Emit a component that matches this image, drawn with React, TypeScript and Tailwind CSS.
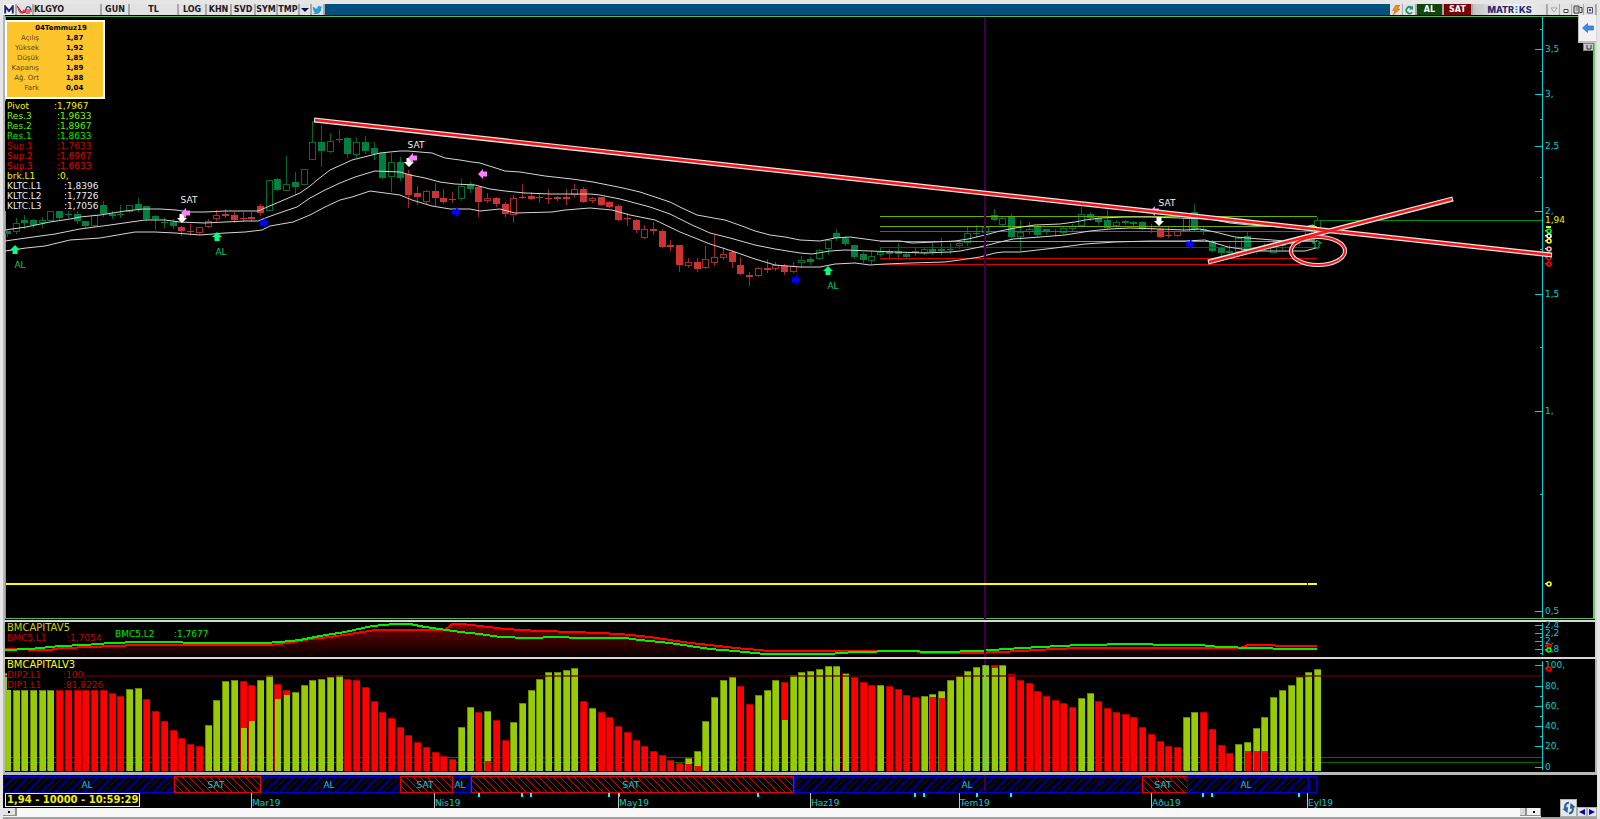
import React from 'react';

type Kind = 'g' | 'G' | 'r' | 'R';
type Candle = [number, number, number, number, Kind];
type Bar = [Kind, number, number?];
type Point = [number, number];

const FONT = 'DejaVu Sans, Verdana, sans-serif';
const CYAN = '#00d0d0';

const slotX = (i: number) => Math.round(15.5 + 8.733 * (i - 1));

// high, body top, body bottom, low, kind (capital = hollow body)
const candles: Candle[] = [
  [230, 231, 234, 236, 'g'], [218, 223, 231, 233, 'G'], [215, 220, 223, 228, 'g'], [219, 220, 225, 227, 'g'],
  [217, 220, 222, 227, 'G'], [211, 211, 220, 220, 'G'], [211, 211, 218, 219, 'g'], [211, 214, 215, 217, 'g'],
  [211, 214, 221, 223, 'g'], [221, 221, 226, 227, 'g'], [214, 215, 225, 226, 'G'], [201, 205, 214, 216, 'g'],
  [211, 214, 216, 218, 'g'], [205, 214, 215, 217, 'g'], [205, 205, 211, 212, 'G'], [198, 204, 209, 211, 'g'],
  [206, 206, 219, 220, 'g'], [215, 216, 219, 229, 'g'], [218, 222, 223, 227, 'g'], [219, 222, 226, 228, 'g'],
  [226, 227, 231, 235, 'r'], [224, 231, 232, 234, 'r'], [227, 227, 232, 233, 'R'], [219, 221, 226, 227, 'R'],
  [210, 215, 218, 220, 'R'], [209, 214, 216, 217, 'r'], [212, 215, 220, 222, 'r'], [212, 218, 219, 221, 'r'],
  [212, 217, 219, 221, 'r'], [204, 206, 213, 215, 'r'], [180, 180, 210, 210, 'G'], [178, 179, 190, 190, 'g'],
  [156, 184, 190, 190, 'G'], [172, 182, 187, 194, 'g'], [169, 169, 184, 184, 'G'], [121, 142, 159, 159, 'G'],
  [125, 142, 151, 166, 'g'], [134, 141, 151, 152, 'G'], [129, 139, 140, 142, 'g'], [137, 138, 154, 157, 'g'],
  [138, 142, 154, 157, 'G'], [136, 142, 151, 153, 'g'], [142, 148, 154, 159, 'g'], [153, 153, 178, 178, 'g'],
  [153, 162, 176, 191, 'G'], [157, 162, 178, 180, 'g'], [170, 174, 195, 207, 'r'], [186, 193, 197, 204, 'r'],
  [190, 191, 201, 203, 'R'], [183, 191, 198, 206, 'r'], [189, 198, 202, 203, 'r'], [192, 199, 200, 202, 'r'],
  [179, 186, 198, 200, 'G'], [182, 184, 189, 192, 'g'], [186, 187, 202, 216, 'r'], [193, 198, 200, 202, 'R'],
  [197, 198, 204, 206, 'r'], [202, 204, 214, 216, 'r'], [195, 198, 214, 222, 'R'], [184, 197, 198, 198, 'r'],
  [192, 196, 199, 199, 'r'], [193, 197, 198, 202, 'r'], [189, 198, 199, 203, 'r'], [196, 197, 199, 200, 'r'],
  [189, 197, 199, 204, 'r'], [184, 189, 194, 197, 'R'], [187, 189, 202, 202, 'r'], [197, 198, 200, 202, 'R'],
  [197, 197, 205, 205, 'r'], [201, 202, 207, 207, 'r'], [204, 206, 220, 220, 'r'], [213, 218, 219, 225, 'r'],
  [219, 220, 230, 232, 'r'], [225, 229, 237, 238, 'R'], [222, 229, 231, 234, 'r'], [229, 231, 247, 247, 'r'],
  [240, 245, 247, 250, 'r'], [245, 245, 265, 271, 'r'], [258, 262, 265, 267, 'R'], [258, 262, 269, 271, 'r'],
  [246, 259, 267, 268, 'R'], [235, 257, 262, 265, 'R'], [247, 254, 257, 259, 'R'], [250, 252, 262, 267, 'r'],
  [257, 265, 274, 274, 'r'], [272, 275, 277, 285, 'r'], [267, 268, 275, 276, 'R'], [259, 268, 270, 272, 'r'],
  [262, 265, 268, 270, 'R'], [264, 266, 272, 274, 'r'], [262, 266, 271, 272, 'R'], [256, 260, 262, 267, 'G'],
  [257, 259, 262, 264, 'g'], [249, 250, 258, 259, 'G'], [239, 240, 248, 254, 'G'], [229, 233, 238, 240, 'g'],
  [236, 238, 244, 245, 'g'], [245, 245, 257, 258, 'g'], [252, 254, 260, 262, 'g'], [251, 256, 260, 263, 'G'],
  [248, 252, 254, 256, 'G'], [249, 251, 254, 258, 'g'], [243, 251, 254, 258, 'g'], [252, 254, 257, 258, 'g'],
  [248, 251, 253, 255, 'g'], [248, 249, 252, 254, 'G'], [243, 249, 252, 254, 'g'], [238, 249, 251, 254, 'g'],
  [243, 249, 250, 253, 'g'], [240, 243, 245, 248, 'G'], [227, 233, 242, 245, 'G'], [225, 233, 234, 237, 'g'],
  [222, 227, 232, 234, 'G'], [209, 215, 220, 220, 'g'], [216, 218, 224, 226, 'G'], [214, 217, 237, 239, 'g'],
  [220, 232, 236, 250, 'G'], [222, 229, 231, 233, 'G'], [225, 226, 235, 237, 'g'], [229, 229, 231, 234, 'g'],
  [229, 231, 232, 235, 'g'], [226, 228, 232, 233, 'G'], [224, 226, 228, 230, 'G'], [207, 214, 225, 226, 'G'],
  [212, 214, 218, 220, 'g'], [217, 218, 222, 224, 'g'], [209, 220, 228, 229, 'g'], [220, 222, 225, 227, 'G'],
  [220, 221, 223, 224, 'g'], [221, 222, 224, 226, 'g'], [221, 222, 229, 229, 'g'], [224, 228, 229, 232, 'r'],
  [228, 229, 237, 237, 'r'], [227, 235, 236, 237, 'r'], [231, 231, 235, 236, 'R'], [217, 218, 231, 231, 'R'],
  [204, 212, 230, 231, 'g'], [226, 229, 232, 234, 'g'], [240, 242, 251, 251, 'g'], [246, 248, 253, 257, 'g'],
  [245, 251, 253, 256, 'g'], [237, 238, 251, 254, 'G'], [231, 236, 249, 250, 'g'], [247, 248, 249, 253, 'g'],
  [243, 247, 248, 250, 'g'], [240, 246, 252, 253, 'G'], [244, 245, 246, 249, 'g'], [240, 243, 244, 247, 'g'],
  [238, 240, 242, 245, 'g'], [227, 228, 236, 238, 'G'], [217, 220, 228, 229, 'G'],
];

const upperBand: Point[] = [[5,230],[26,227],[50,222],[70,219],[80,217],[100,215],[125,211],[143,209],[160,209],[176,210],[190,212],[205,212],[225,211],[258,211],[265,208],[272,205],[300,193],[310,186],[317,180],[330,170],[352,160],[380,153],[400,151],[408,151],[420,152],[432,153],[445,158],[460,160],[472,162],[480,163],[505,171],[520,172],[545,176],[572,179],[593,182],[623,188],[640,192],[655,197],[670,202],[682,208],[697,215],[708,217],[725,220],[742,226],[755,231],[770,235],[785,237],[800,240],[820,241],[835,238],[850,237],[865,239],[880,241],[900,241],[912,243],[935,242],[955,241],[968,239],[985,235],[1000,231],[1015,228],[1035,225],[1060,224],[1075,222],[1085,220],[1100,218],[1125,217],[1150,217],[1180,218],[1210,219],[1230,223],[1250,225],[1280,227],[1300,228],[1313,225]];
const middleBand: Point[] = [[5,241],[26,238],[55,234],[80,229],[110,225],[145,220],[165,220],[180,222],[205,223],[225,222],[245,221],[258,221],[268,217],[285,211],[297,207],[310,198],[325,190],[340,183],[355,177],[375,171],[400,172],[410,175],[425,178],[440,182],[455,184],[475,185],[490,189],[505,191],[525,193],[550,194],[590,194],[600,195],[620,199],[650,207],[670,214],[692,225],[710,233],[730,238],[755,245],[775,249],[800,253],[812,254],[830,251],[845,250],[870,251],[895,252],[925,253],[950,252],[960,251],[980,247],[1000,242],[1013,239],[1040,237],[1065,235],[1090,231],[1110,229],[1130,228],[1160,229],[1185,230],[1200,229],[1215,232],[1235,237],[1260,239],[1285,241],[1315,240]];
const lowerBand: Point[] = [[5,251],[26,248],[45,246],[70,240],[100,238],[135,232],[155,232],[175,233],[200,235],[225,233],[245,232],[262,230],[270,226],[293,222],[310,215],[325,207],[340,200],[352,197],[370,191],[385,193],[400,195],[412,200],[432,206],[450,209],[470,209],[480,211],[500,209],[515,213],[552,212],[565,210],[590,208],[612,210],[630,215],[655,220],[680,232],[710,244],[735,252],[755,259],[775,265],[800,267],[820,267],[835,264],[855,263],[870,265],[885,264],[910,263],[945,262],[960,260],[980,257],[995,253],[1003,252],[1020,252],[1055,248],[1085,244],[1115,242],[1150,241],[1185,241],[1205,240],[1215,243],[1228,247],[1255,251],[1280,251],[1305,251],[1316,248]];

const bmcRed: Point[] = [[5,649],[50,650],[60,648],[95,647],[110,646],[140,645],[270,645],[295,642],[310,639],[330,637],[350,634],[375,630],[445,630],[452,624],[462,624],[480,626],[505,629],[540,631],[575,632],[620,634],[650,637],[670,640],[690,643],[710,645],[735,648],[770,651],[915,651],[922,653],[975,653],[1000,652],[1020,651],[1055,649],[1080,648],[1240,648],[1248,645],[1270,645],[1280,646],[1317,646]];
const bmcGreen: Point[] = [[5,650],[30,649],[60,646],[85,645],[110,643],[140,642],[165,642],[200,643],[265,643],[280,642],[300,640],[320,636],[345,632],[372,626],[395,624],[410,624],[425,627],[440,629],[460,632],[480,634],[500,637],[530,638],[557,637],[580,638],[625,638],[640,640],[670,643],[690,646],[710,649],[735,651],[765,654],[828,654],[855,652],[900,651],[940,652],[980,651],[1005,649],[1040,647],[1080,645],[1135,644],[1170,645],[1200,645],[1220,647],[1255,648],[1290,649],[1317,649]];

// colour of the upper part, its top, and the top of the other colour below it
const bars: Bar[] = [
  ['g',673],['g',690],['g',690],['g',690],['g',690],['g',690],['r',690],['r',690],['r',690],['r',690],['r',690],['r',690],
  ['r',693],['r',696],['g',689],['g',688],['r',699],['r',711],['r',721],['r',730],['r',738],['r',744],['r',746],
  ['g',725],['g',700],['g',681],['g',680],['r',681,728],['r',685,721],['g',680],['g',675],['r',684,699],['r',690,695],
  ['g',692],['g',685],['g',680],['g',679],['g',677],['g',675],['r',679],['r',680],['r',687],['r',701],['r',712],
  ['r',718],['r',727],['r',735],['r',742],['r',747],['r',752],['r',756],['r',759],['g',727],['g',707],['r',712],
  ['g',711,761],['r',720],['r',740],['g',722],['g',703],['g',690],['g',679],['g',672],['g',672],['g',670],['g',668],
  ['r',701],['g',708],['r',712],['r',717],['r',726],['r',732],['r',740],['r',746],['r',751],['r',755],['r',760],
  ['r',763],['g',758,764],['g',751,766],['g',721],['g',697],['g',680],['g',677],['r',686],['r',704],['g',695],
  ['g',690],['g',680],['r',682,720],['g',675],['g',672],['g',671],['g',669],['g',666],['g',666],['r',673,674],
  ['r',677],['r',682],['r',685],['g',685],['r',686],['r',689],['r',695],['r',697],['g',696],['g',694,697],
  ['g',691,698],['g',680],['g',676],['g',671],['g',667],['g',665],['r',665,668],['g',665],['r',674],['r',680],
  ['r',683],['r',691],['r',696],['r',700],['r',703],['r',707],['g',698],['g',693],['r',701],['r',708],['r',712],
  ['r',714],['r',717],['r',727],['r',734],['r',741],['r',746],['r',747],['g',717],['g',712],['r',712],['r',729],
  ['r',745],['r',753],['g',744],['g',742,751],['g',728,751],['g',717,751],['g',697],['g',690],['g',685],['g',677],
  ['g',672],['g',669],
];

const pivots: [number, string][] = [
  [216, '#66b000'], [226, '#66b000'], [231, '#00a000'], [241, '#a8a800'], [247, '#c80000'], [258, '#e00000'], [264, '#e00000'],
];

const toPoints = (p: Point[]) => p.map((q) => q.join(',')).join(' ');

type Dir = 'up' | 'down' | 'left' | 'right';
const turn: Record<Dir, number> = { up: 0, right: 90, down: 180, left: 270 };

function Arrow({ x, y, dir, color }: { x: number; y: number; dir: Dir; color: string }) {
  return (
    <path d="M0,-5 L5,0 H2.5 V4 H-2.5 V0 H-5 Z" fill={color} transform={`translate(${x} ${y}) rotate(${turn[dir]})`} />
  );
}

function Label({ x, y, color, anchor = 'start', children }: { x: number; y: number; color: string; anchor?: 'start' | 'middle'; children: string }) {
  return (
    <text x={x} y={y + 3} fontSize={9} fontFamily={FONT} fill={color} textAnchor={anchor}>
      {children}
    </text>
  );
}

function Marker({ y, color }: { y: number; color: string }) {
  return (
    <g shapeRendering="auto">
      <circle cx={1549} cy={y} r={2} fill="#000" stroke={color} strokeWidth={1.6} />
      <rect x={1545} y={y - 1} width={2} height={1.5} fill={color} />
    </g>
  );
}

const priceY = (v: number) => Math.round(411 - 288.8 * Math.log(v));

function PricePanel() {
  return (
    <svg viewBox="5 15 1590 605" className="block w-full" shapeRendering="crispEdges">
      <rect x={5} y={15} width={1590} height={605} fill="#000" />
      <path d="M5,16.5 H1595 M5.5,16 V619 M5,618.5 H1595" stroke="#5cb85c" strokeWidth={1} />
      <rect x={1593} y={16} width={2} height={603} fill="#6cc86c" />
      {candles.map(([hi, top, bot, lo, k], i) => {
        const x = slotX(i);
        const up = k === 'g' || k === 'G';
        const hollow = k === 'G' || k === 'R';
        return (
          <g key={i}>
            <rect x={x} y={hi} width={1} height={lo - hi + 1} fill={up ? '#006633' : '#a02828'} />
            {hollow ? (
              <rect x={x - 2.5} y={top + 0.5} width={6} height={Math.max(2, bot - top)} fill="#000" stroke={up ? '#006d36' : '#a82c2c'} />
            ) : (
              <rect x={x - 3} y={top} width={7} height={bot - top} fill={up ? '#008040' : '#cc3333'} />
            )}
          </g>
        );
      })}
      {pivots.map(([y, c]) => (
        <rect key={y} x={880} y={y} width={437} height={1} fill={c} />
      ))}
      <rect x={1321} y={220} width={221} height={1} fill="#009000" />
      {[upperBand, middleBand, lowerBand].map((b, i) => (
        <polyline key={i} points={toPoints(b)} fill="none" stroke="#d4d4d4" strokeWidth={1} shapeRendering="auto" />
      ))}
      <rect x={984} y={17} width={2} height={603} fill="#400044" />
      <rect x={6} y={583} width={1301} height={2} fill="#ffff00" />
      <rect x={1308} y={583} width={9} height={2} fill="#ffff00" />

      <g shapeRendering="auto">
        <Arrow x={15} y={250} dir="up" color="#00ff80" />
        <Arrow x={217} y={237} dir="up" color="#00ff80" />
        <Arrow x={828} y={271} dir="up" color="#00ff80" />
        <Arrow x={264} y={223} dir="right" color="#0000ff" />
        <Arrow x={456} y={212} dir="right" color="#0000ff" />
        <Arrow x={796} y={280} dir="right" color="#0000ff" />
        <Arrow x={1190} y={244} dir="right" color="#0000ff" />
        <Arrow x={182} y={218} dir="down" color="#ffffff" />
        <Arrow x={409} y={162} dir="down" color="#ffffff" />
        <Arrow x={1159} y={221} dir="down" color="#ffffff" />
        <Arrow x={186} y={213} dir="left" color="#ff80ff" />
        <Arrow x={413} y={158} dir="left" color="#ff80ff" />
        <Arrow x={483} y={174} dir="left" color="#ff80ff" />
        <Arrow x={1155} y={211} dir="left" color="#ff80ff" />
        <path d="M1315,248 V243 H1312.5 L1317,240.500 L1321.500,243 H1319 V248 Z" fill="none" stroke="#00d060" />
        <path d="M1310,227 h3 v-2 l4,3" fill="none" stroke="#d8ff40" />
      </g>
      <Label x={189} y={200} color="#f0f0f0" anchor="middle">SAT</Label>
      <Label x={416} y={145} color="#f0f0f0" anchor="middle">SAT</Label>
      <Label x={1167} y={203} color="#f0f0f0" anchor="middle">SAT</Label>
      <Label x={20} y={265} color="#00c870" anchor="middle">AL</Label>
      <Label x={221} y={252} color="#00c870" anchor="middle">AL</Label>
      <Label x={833} y={286} color="#00c870" anchor="middle">AL</Label>

      <rect x={1542} y={17} width={1} height={601} fill={CYAN} />
      {[3.75, 3.25, 2.75, 2.25, 1.75, 1.25, 0.75].map((v) => (
        <rect key={v} x={1540} y={priceY(v)} width={2} height={1} fill={CYAN} />
      ))}
      {[[3.5, '3,5'], [3, '3,'], [2.5, '2,5'], [2, '2,'], [1.5, '1,5'], [1, '1,'], [0.5, '0,5']].map(([v, t]) => (
        <g key={t}>
          <rect x={1535} y={priceY(Number(v))} width={7} height={1} fill={CYAN} />
          <Label x={1545} y={priceY(Number(v))} color={CYAN}>{String(t)}</Label>
        </g>
      ))}
      <rect x={1544} y={216} width={26} height={9} fill="#000" />
      <Label x={1545} y={220} color="#f0f000">1,94</Label>
      <rect x={1546} y={226} width={5} height={2} fill="#c0ff40" />
      <Marker y={231} color="#00ff00" />
      <Marker y={236} color="#ffffff" />
      <Marker y={241} color="#ffff00" />
      <Marker y={249} color="#ffb0b0" />
      <Marker y={258} color="#ff0000" />
      <Marker y={264} color="#ff0000" />
      <Marker y={584} color="#ffff00" />

      <g fill="none" shapeRendering="auto">
        <path d="M314,120 L1552,255 M1208,262 L1453,199" stroke="#e8e8e8" strokeWidth={5} />
        <ellipse cx={1318} cy={251} rx={27} ry={14} stroke="#e8e8e8" strokeWidth={4} />
        <path d="M315,120 L1551,255 M1209,262 L1452,199" stroke="#ff1414" strokeWidth={2.4} />
        <ellipse cx={1318} cy={251} rx={27} ry={14} stroke="#ff1414" strokeWidth={2} />
      </g>
    </svg>
  );
}

function BmcPanel() {
  return (
    <svg viewBox="5 622 1590 35" className="block w-full overflow-visible" shapeRendering="crispEdges">
      <defs>
        <linearGradient id="bmcFill" gradientUnits="userSpaceOnUse" x1="0" y1="622" x2="0" y2="657">
          <stop offset="0" stopColor="#780000" />
          <stop offset="1" stopColor="#080000" />
        </linearGradient>
      </defs>
      <rect x={5} y={622} width={1590} height={35} fill="#000" />
      <polygon points={`5,657 ${toPoints(bmcRed)} 1317,657`} fill="url(#bmcFill)" />
      <polyline points={toPoints(bmcRed)} fill="none" stroke="#ff0000" strokeWidth={2} />
      <polyline points={toPoints(bmcGreen)} fill="none" stroke="#00f000" strokeWidth={2} />
      <rect x={984} y={622} width={2} height={35} fill="#400044" />
      <rect x={1542} y={623} width={1} height={32} fill={CYAN} />
      {[629, 637, 645, 653].map((y) => (
        <rect key={y} x={1540} y={y} width={2} height={1} fill={CYAN} />
      ))}
      {([[625, '2,4'], [633, '2,2'], [641, '2,'], [649, '1,8']] as [number, string][]).map(([y, t]) => (
        <g key={t}>
          <rect x={1535} y={y} width={7} height={1} fill={CYAN} />
          <Label x={1545} y={y} color={CYAN}>{t}</Label>
        </g>
      ))}
      <Marker y={646} color="#ff0000" />
      <Marker y={650} color="#00ff00" />
    </svg>
  );
}

function DipPanel() {
  const color = (k: Kind) => (k === 'g' ? '#99cc00' : '#ff0000');
  const edge = (k: Kind) => (k === 'g' ? '#668800' : '#b00000');
  return (
    <svg viewBox="5 659 1590 113" className="block w-full" shapeRendering="crispEdges">
      <rect x={5} y={659} width={1590} height={113} fill="#000" />
      <rect x={10} y={757} width={1532} height={1} fill="#006c00" />
      <rect x={10} y={762} width={1532} height={1} fill="#006c00" />
      {bars.map(([k, top, split], i) => {
        const x = slotX(i) - 3;
        const other: Kind = k === 'g' ? 'r' : 'g';
        return (
          <g key={i}>
            <rect x={x} y={top} width={7} height={771 - top} fill={color(k)} />
            {split && <rect x={x} y={split} width={7} height={771 - split} fill={color(other)} />}
            <path d={`M${x + 0.5},771 V${top + 0.5} H${x + 7}`} fill="none" stroke={edge(k)} />
          </g>
        );
      })}
      <rect x={5} y={675} width={1537} height={2} fill="#600000" fillOpacity={0.65} />
      <rect x={984} y={659} width={2} height={6} fill="#400044" />
      <rect x={984} y={665} width={2} height={106} fill="#60d060" />
      <rect x={1542} y={661} width={1} height={109} fill={CYAN} />
      {[696, 716, 736].map((y) => (
        <rect key={y} x={1540} y={y} width={2} height={1} fill={CYAN} />
      ))}
      {([[665, '100,'], [686, '80,'], [706, '60,'], [726, '40,'], [746, '20,'], [767, '0']] as [number, string][]).map(([y, t]) => (
        <g key={t}>
          <rect x={1535} y={y} width={7} height={1} fill={CYAN} />
          <Label x={1545} y={y} color={CYAN}>{t}</Label>
        </g>
      ))}
      <Marker y={669} color="#ff0000" />
    </svg>
  );
}

const segments: [number, number, 'AL' | 'SAT'][] = [
  [3, 173, 'AL'], [174, 260, 'SAT'], [261, 400, 'AL'], [400, 452, 'SAT'], [453, 470, 'AL'],
  [471, 793, 'SAT'], [794, 1142, 'AL'], [1142, 1187, 'SAT'], [1187, 1308, 'AL'],
];
const months: [number, string][] = [
  [251, 'Mar19'], [434, 'Nis19'], [618, 'May19'], [810, 'Haz19'], [959, 'Tem19'], [1151, 'Aðu19'], [1307, 'Eyl19'],
];

function SignalStrip() {
  return (
    <svg viewBox="3 775 1594 33" className="block w-full" shapeRendering="crispEdges">
      <defs>
        <pattern id="hatchAl" width="7" height="7" patternUnits="userSpaceOnUse">
          <rect width="7" height="7" fill="#00000c" />
          <path d="M-1,8 L8,-1 M-1,1 L1,-1 M6,8 L8,6" stroke="#0000c0" strokeWidth="1" shapeRendering="auto" />
        </pattern>
        <pattern id="hatchSat" width="7" height="7" patternUnits="userSpaceOnUse">
          <rect width="7" height="7" fill="#080000" />
          <path d="M-1,-1 L8,8 M6,-1 L8,1 M-1,6 L1,8" stroke="#b81818" strokeWidth="1" shapeRendering="auto" />
        </pattern>
      </defs>
      <rect x={3} y={775} width={1594} height={33} fill="#000" />
      {segments.map(([a, b, t]) => (
        <g key={a}>
          <rect x={a + 0.5} y={776.5} width={b - a} height={16} fill={t === 'AL' ? 'url(#hatchAl)' : 'url(#hatchSat)'} stroke={t === 'AL' ? '#0000d8' : '#e80000'} />
          <Label x={Math.floor((a + b) / 2) - 1} y={785} color={CYAN} anchor="middle">{t}</Label>
        </g>
      ))}
      <rect x={1308.5} y={776.5} width={8} height={16} fill="#000010" stroke="#0000c8" />
      <rect x={984} y={775} width={2} height={16} fill="#400044" />
      {[479, 522, 531, 609, 619, 758, 915, 924, 977, 1011, 1203, 1212, 1299].map((x) => (
        <rect key={x} x={x - 1} y={793} width={2} height={4} fill="#00ffff" />
      ))}
      {months.map(([x, t]) => (
        <g key={t}>
          <rect x={x} y={793} width={1} height={15} fill="#c0c0c0" />
          <Label x={x + 1} y={803} color={CYAN}>{t}</Label>
        </g>
      ))}
    </svg>
  );
}

function ToolButton({ className, label, children }: { className: string; label?: string; children?: React.ReactNode }) {
  return (
    <button
      type="button"
      aria-label={label}
      className={`flex h-full shrink-0 items-center justify-center overflow-hidden border-r-2 border-[#a8a8a8] bg-[#e2e2e2] text-[8px] leading-none font-bold text-[#202020] ${className}`}
    >
      {children}
    </button>
  );
}

function TitleBar() {
  return (
    <header className="flex h-[11px] w-full bg-[#00507f]">
      <ToolButton className="w-[14px] border-r-0 bg-[#f4f4fa]" label="Matriks">
        <svg viewBox="0 0 10 9" className="h-[9px] w-[10px]">
          <path d="M1.200,8.500 V1.500 L5,6 L8.800,1.500 V8.500" fill="none" stroke="#25256b" strokeWidth="2" />
        </svg>
      </ToolButton>
      <ToolButton className="w-[17px] border-r-0 bg-[#d0d0d8]" label="Grafik">
        <svg viewBox="0 0 15 10" className="h-[10px] w-[15px]">
          <path d="M0,1 L3,5 Q5,9 8,7 Q9,2 11,1.500 Q13.500,2 14,5" fill="none" stroke="#303080" strokeWidth="1.2" />
          <path d="M1,2 Q2,8 5,8 L7,5 M8,5 V8 M10,4 V9 M12,4 V9 M14,5 V7" fill="none" stroke="#f03030" strokeWidth="1.4" />
        </svg>
      </ToolButton>
      <ToolButton className="w-[68px] !justify-start">KLGYO</ToolButton>
      <ToolButton className="w-[28px]">GUN</ToolButton>
      <ToolButton className="w-[49px]">TL</ToolButton>
      <ToolButton className="w-[28px]">LOG</ToolButton>
      <ToolButton className="w-[25px]">KHN</ToolButton>
      <ToolButton className="w-6">SVD</ToolButton>
      <ToolButton className="w-[22px]">SYM</ToolButton>
      <ToolButton className="w-[22px]">TMP</ToolButton>
      <ToolButton className="w-3" label="Menü">
        <svg viewBox="0 0 8 4" className="h-1 w-2"><path d="M0,0 H8 L4,4 Z" fill="#10104a" /></svg>
      </ToolButton>
      <ToolButton className="w-[13px] border-r-0" label="Twitter">
        <svg viewBox="0 0 24 24" className="h-[10px] w-[11px]">
          <path fill="#1e9fe0" d="M23.6 4.9c-.9.4-1.800.7-2.800.8 1-.6 1.800-1.600 2.200-2.700-1 .6-2 1-3.100 1.200A4.900 4.900 0 0 0 11.500 8.700C7.400 8.500 3.800 6.500 1.400 3.600c-1.300 2.200-.7 5.100 1.500 6.600-.8 0-1.600-.2-2.200-.6 0 2.300 1.600 4.400 3.900 4.900-.7.2-1.500.2-2.200.1.600 2 2.400 3.400 4.600 3.400A9.900 9.900 0 0 1-.3 20C8.500 25.600 21.200 20.500 21.200 7.400c.9-.7 1.800-1.500 2.400-2.500z" />
        </svg>
      </ToolButton>
      <div className="flex-1" />
      <ToolButton className="w-[13px] !border-r" label="Hızlı emir">
        <svg viewBox="0 0 10 10" className="h-[10px] w-[10px]"><path d="M5,0 H9 L6.500,4 H9 L2,10 L4,5.500 H1.500 Z" fill="#f09010" stroke="#a05000" strokeWidth=".4" /></svg>
      </ToolButton>
      <ToolButton className="w-[14px] border-r-0" label="Yenile">
        <svg viewBox="0 0 10 10" className="h-[10px] w-[10px]">
          <path d="M8,7.500 A3.300,3.300 0 1 1 7.500,2.500" fill="none" stroke="#109070" strokeWidth="1.700" />
          <path d="M9,.5 V4.500 H5 Z" fill="#109070" />
        </svg>
      </ToolButton>
      <ToolButton className="w-[27px] border-[#104010] !bg-[#0c480c] !text-white">AL</ToolButton>
      <ToolButton className="w-[29px] border-[#600000] !bg-[#780000] !text-white">SAT</ToolButton>
      <ToolButton className="w-[75px] bg-linear-to-r from-[#c4c4c4] via-[#f4f4f4] to-[#e0e0e0]" label="MATRIKS">
        <span className="flex items-center font-['Inter'] text-[9px] font-extrabold text-[#2a2a6c]">
          <span>MATR</span>
          <svg viewBox="0 0 3 7" className="mx-px h-[7px] w-[3px]"><path d="M.5,0 h2 v1.500 h-2 z M.5,2.700 h2 v1.500 h-2 z M.5,5.400 h2 v1.500 h-2 z" fill="#2090c0" /></svg>
          <span>KS</span>
        </span>
      </ToolButton>
      <ToolButton className="w-3 !border-r" label="Seçenekler">
        <svg viewBox="0 0 8 6" className="h-[6px] w-2"><path d="M1,1 H7 L4,5 Z" fill="#fff" stroke="#909090" strokeWidth=".8" /></svg>
      </ToolButton>
      <ToolButton className="w-3 !border-r" label="Küçült">
        <svg viewBox="0 0 6 6" className="h-[6px] w-[6px]"><path d="M1,2.500 h4 v3 h-4 z" fill="#fff" stroke="#404040" /></svg>
      </ToolButton>
      <ToolButton className="w-3 !border-r" label="Büyüt">
        <svg viewBox="0 0 10 9" className="h-[9px] w-[10px]"><path d="M1,1 h5 v7 h-5 z M7,2.500 h2 v5 h-2" fill="none" stroke="#303030" /><path d="M2.500,3 h2.500 M2.500,5 h2.500" stroke="#303030" strokeWidth=".7" /></svg>
      </ToolButton>
      <ToolButton className="w-[13px] border-r-0" label="Kapat">
        <svg viewBox="0 0 8 8" className="h-2 w-2"><path d="M1.500,1.500 h5 v5.500 h-5 z M3,3 l2,2 M5,3 l-2,2" fill="none" stroke="#505068" /></svg>
      </ToolButton>
    </header>
  );
}

const quote: [string, string][] = [
  ['Açılış', '1,87'], ['Yüksek', '1,92'], ['Düşük', '1,85'], ['Kapanış', '1,89'], ['Ağ. Ort', '1,88'], ['Fark', '0,04'],
];

const legend: [string, string, string, string][] = [
  ['Pivot', ':1,7967', 'text-[#f0f000]', 'w-[47px]'],
  ['Res.3', ':1,9633', 'text-[#80f000]', 'w-[50px]'],
  ['Res.2', ':1,8967', 'text-[#58f000]', 'w-[50px]'],
  ['Res.1', ':1,8633', 'text-[#00e800]', 'w-[50px]'],
  ['Sup.1', ':1,7633', 'text-[#c80000]', 'w-[50px]'],
  ['Sup.2', ':1,6967', 'text-[#e00000]', 'w-[50px]'],
  ['Sup.3', ':1,6633', 'text-[#e00000]', 'w-[50px]'],
  ['brk.L1', ':0,', 'text-[#f0f000]', 'w-[50px]'],
  ['KLTC.L1', ':1,8396', 'text-[#ececec]', 'w-[57px]'],
  ['KLTC.L2', ':1,7726', 'text-[#ececec]', 'w-[57px]'],
  ['KLTC.L3', ':1,7056', 'text-[#ececec]', 'w-[57px]'],
];

function QuoteBox() {
  return (
    <div className="w-[100px] border-2 border-white bg-[#fcc52c] px-px pt-px pb-1">
      <table className="w-full text-[7px] leading-[10px]">
        <caption className="pl-3 text-center font-bold text-black">04Temmuz19</caption>
        <tbody>
          {quote.map(([k, v]) => (
            <tr key={k}>
              <th scope="row" className="w-[31px] text-right font-normal whitespace-nowrap text-[#5b4a18]">{k}</th>
              <td className="pl-[27px] text-left font-bold text-black">{v}</td>
            </tr>
          ))}
        </tbody>
      </table>
    </div>
  );
}

export default function App() {
  return (
    <div className="min-h-screen bg-[#e6e6e6] px-[3px] pt-1 font-['DejaVu_Sans',Verdana,sans-serif]">
      <TitleBar />
      <main>
        <section className="relative border-x-2 border-b-2 border-[#d8d8d8] border-l-[#b4b4b4]">
          <PricePanel />
          <div className="absolute top-[5px] left-0 flex flex-col gap-[2px]">
            <QuoteBox />
            <div className="w-[95px] bg-black pl-[2px] text-[9px] leading-[10px]">
              {legend.map(([name, value, color, width]) => (
                <div key={name} className={`flex ${color}`}>
                  <span className={`shrink-0 ${width}`}>{name}</span>
                  <span>{value}</span>
                </div>
              ))}
            </div>
          </div>
          <div className="absolute -right-px top-0 flex flex-col items-end">
            <button type="button" aria-label="Geri" className="flex h-7 w-[18px] items-center justify-center border-b-2 border-l border-[#c0c0c0] bg-[#f2f2f2]">
              <svg viewBox="0 0 12 10" className="h-[10px] w-3"><path d="M0.500,5 L5.500,.5 V3 H11.500 V7 H5.500 V9.500 Z" fill="#3a8ee0" stroke="#2060b0" strokeWidth=".6" /></svg>
            </button>
            <button type="button" aria-label="Sabitle" className="mr-[2px] flex h-2 w-[11px] items-center justify-center border border-[#808080] bg-[#c8c8c8]">
              <svg viewBox="0 0 6 5" className="h-[5px] w-[6px]"><path d="M1,0 V4 H5 V0" fill="none" stroke="#303030" /></svg>
            </button>
          </div>
        </section>

        <section className="relative border-x-2 border-b-2 border-[#d8d8d8] border-l-[#b4b4b4]">
          <BmcPanel />
          <div className="absolute top-[1px] left-[2px] text-[9px] leading-[10px]">
            <div className="text-[10px] text-[#d0d000]">BMCAPITAV5</div>
            <div className="flex text-[#c80000]">
              <span className="w-[60px]">BMC5.L1</span>
              <span>:1,7054</span>
            </div>
          </div>
          <div className="absolute top-[7px] left-[110px] flex text-[9px] leading-[10px] text-[#00e000]">
            <span className="w-[59px]">BMC5.L2</span>
            <span>:1,7677</span>
          </div>
        </section>

        <section className="relative border-x-2 border-b-[3px] border-[#b8b8b8]">
          <DipPanel />
          <div className="absolute top-[1px] left-[2px] flex flex-col items-start text-[9px] leading-[10px]">
            <div className="text-[10px] text-[#ffff00]">BMCAPITALV3</div>
            <div className="flex w-[79px] bg-black text-[#c80000]">
              <span className="w-[56px]">DIP2.L1</span>
              <span>:100,</span>
            </div>
            <div className="flex w-[98px] bg-black text-[#c80000]">
              <span className="w-[56px]">DIP1.L1</span>
              <span>:81,8226</span>
            </div>
          </div>
        </section>

        <section className="relative">
          <SignalStrip />
          <output className="absolute top-[18px] left-[2px] h-[14px] border border-[#f0f0f0] bg-black px-px text-[10px] leading-3 font-bold whitespace-nowrap text-[#f0f000]">
            1,94 - 10000 - 10:59:29
          </output>
        </section>

        <footer className="relative flex h-[9px] bg-black">
          <div className="flex flex-1 justify-between bg-[#f8f8f8]">
            <button type="button" aria-label="Sola kaydır" className="flex h-2 w-[14px] items-center justify-center border-r-2 border-b border-[#909090] bg-[#e4e4e4]">
              <span className="h-[2px] w-[2px] bg-black" />
            </button>
            <div className="flex">
              <div className="h-2 w-[7px] border-r-2 border-b border-[#909090] bg-[#d8d8d8]" />
              <button type="button" aria-label="Sağa kaydır" className="flex h-2 w-[14px] items-center justify-center border-r border-b border-[#909090] bg-[#f0f0f0]">
                <span className="h-[2px] w-[2px] bg-black" />
              </button>
            </div>
          </div>
          <div className="w-[56px]" />
          <div className="absolute right-0 bottom-0 flex items-end">
            <button type="button" aria-label="Yenile" className="flex h-[18px] w-[17px] items-center justify-center border border-[#b0b0b0] bg-[#e8e8e8]">
              <svg viewBox="0 0 14 14" className="h-[14px] w-[14px]">
                <path d="M7,1.500 C3.500,2 2.500,5 3.500,7.500 M7,12.500 C10.500,12 11.500,9 10.500,6.500" fill="none" stroke="#2860a8" strokeWidth="2.200" />
                <path d="M.5,8 L6,6 L5.500,12 Z M13.500,6 L8,8 L8.500,2 Z" fill="#2860a8" />
              </svg>
            </button>
            <button type="button" aria-label="Önceki" className="flex h-[10px] w-[10px] items-center justify-center border border-[#b0b0b0] bg-[#e8e8e8]">
              <svg viewBox="0 0 6 6" className="h-[6px] w-[6px]"><path d="M6,0 V6 L0,3 Z" fill="#0000c0" /></svg>
            </button>
            <button type="button" aria-label="Sonraki" className="flex h-[10px] w-[10px] items-center justify-center border border-[#b0b0b0] bg-[#e8e8e8]">
              <svg viewBox="0 0 6 6" className="h-[6px] w-[6px]"><path d="M0,0 V6 L6,3 Z" fill="#0000c0" /></svg>
            </button>
          </div>
        </footer>
        <div className="h-[2px] bg-[#a0a0a0]" />
      </main>
    </div>
  );
}
